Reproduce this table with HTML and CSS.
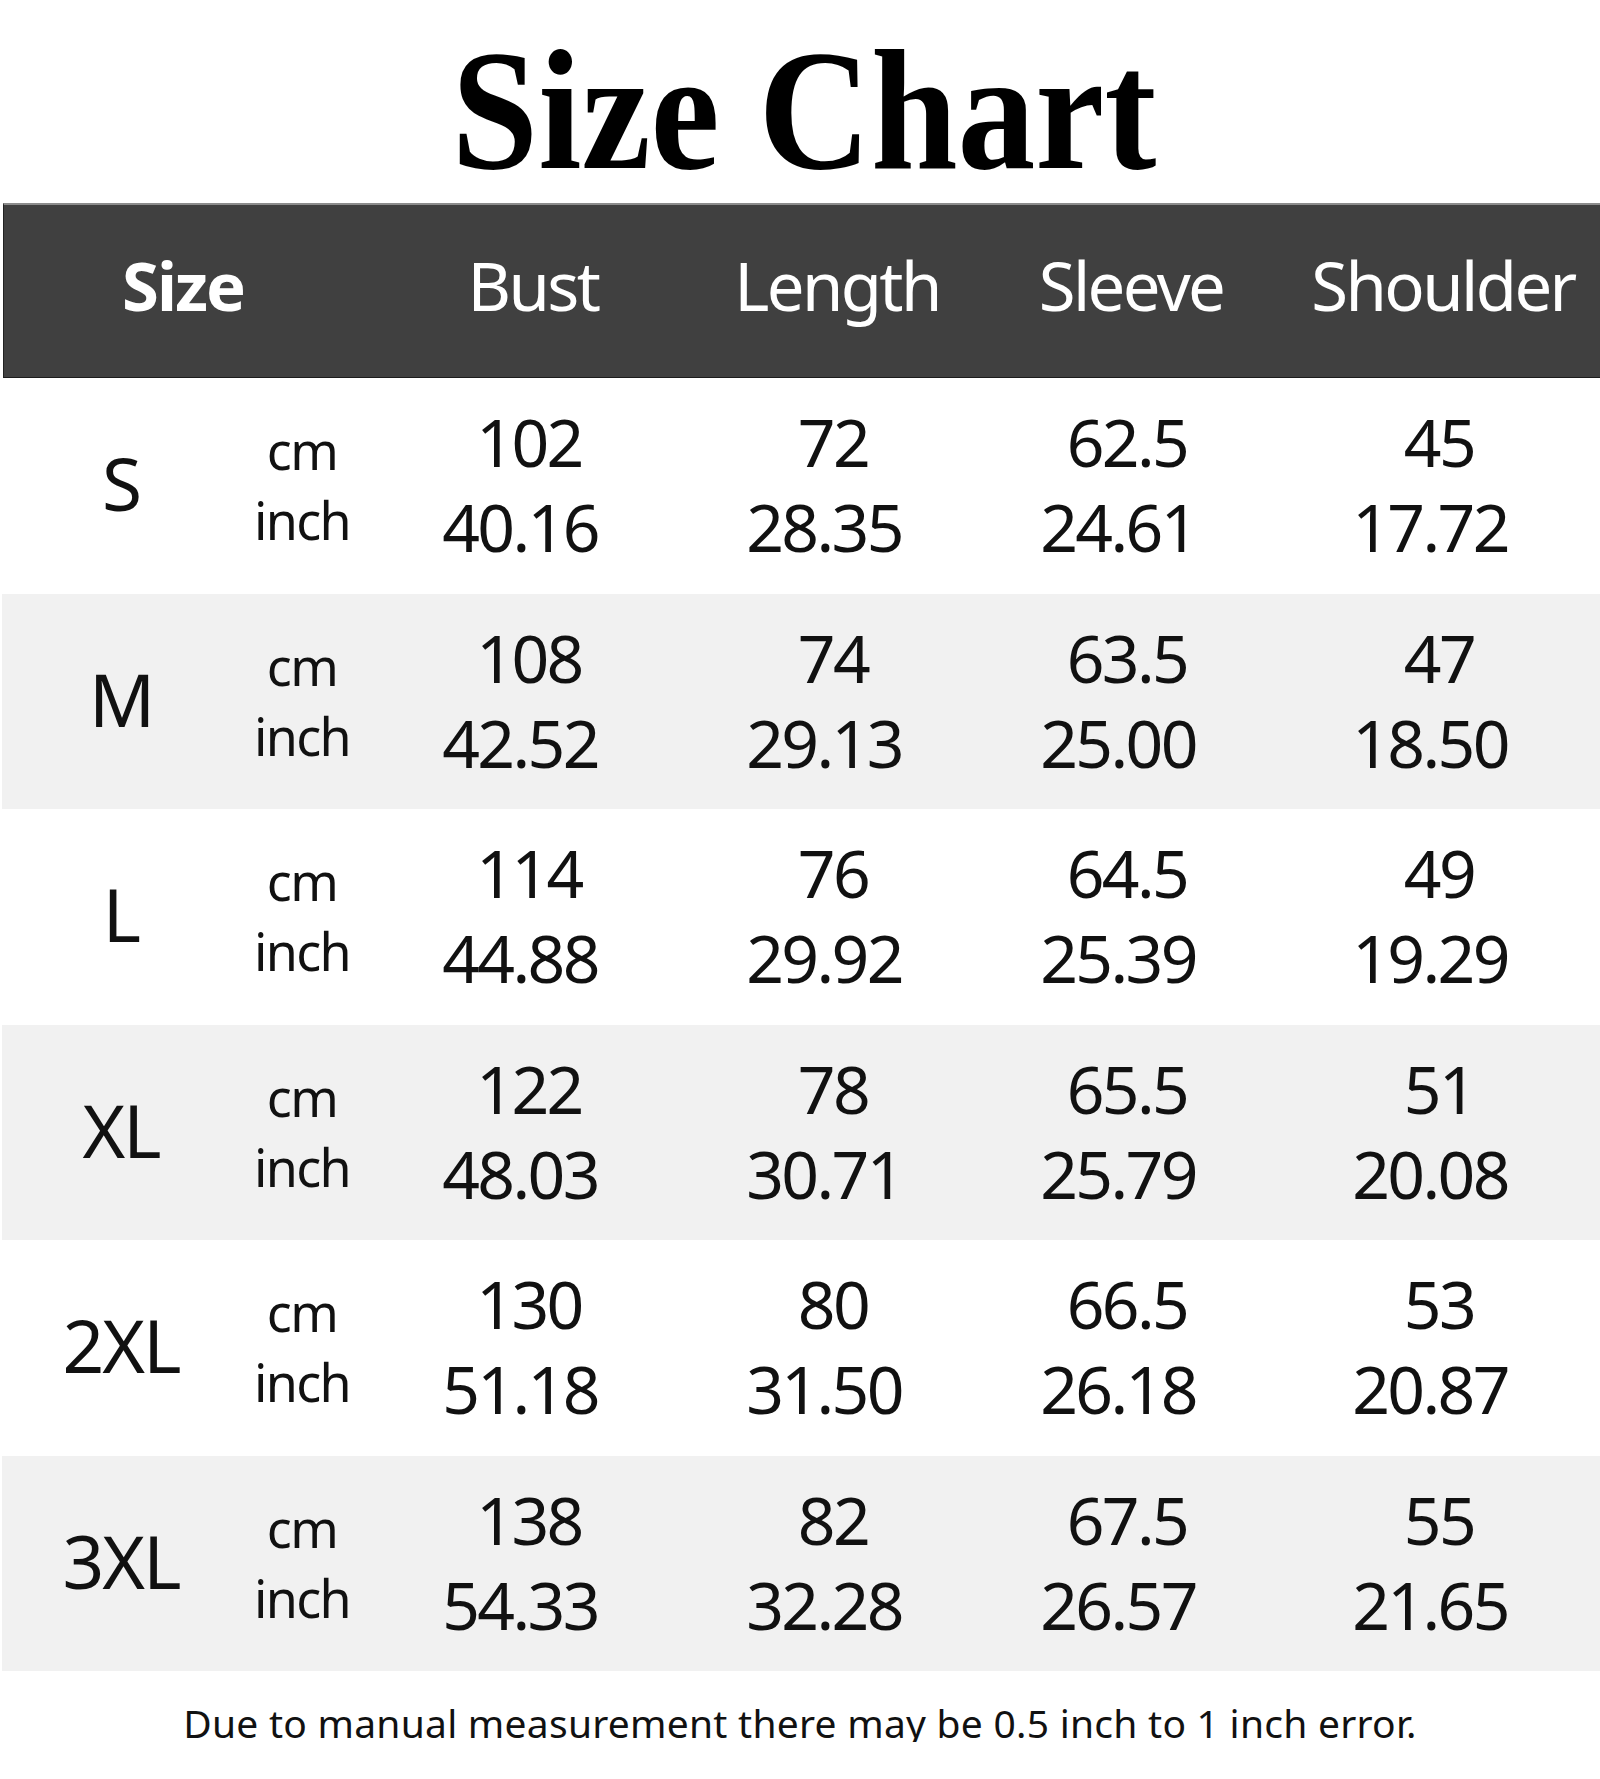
FILE: index.html
```html
<!DOCTYPE html>
<html lang="en">
<head>
<meta charset="utf-8">
<title>Size Chart</title>
<link rel="stylesheet" href="styles.css">
</head>
<body>
<div class="page">
  <h1 class="title"><span class="title-text">Size Chart</span></h1>
  <div class="chart">
    <div class="row head">
      <div class="hcell hsize">Size</div>
      <div class="hcell">Bust</div>
      <div class="hcell">Length</div>
      <div class="hcell">Sleeve</div>
      <div class="hcell">Shoulder</div>
    </div>

    <div class="row">
      <div class="size">S</div>
      <div class="unit"><span>cm</span><span>inch</span></div>
      <div class="val"><span class="cm">102</span><span class="in">40.16</span></div>
      <div class="val"><span class="cm">72</span><span class="in">28.35</span></div>
      <div class="val"><span class="cm">62.5</span><span class="in">24.61</span></div>
      <div class="val"><span class="cm">45</span><span class="in">17.72</span></div>
    </div>

    <div class="row alt">
      <div class="size">M</div>
      <div class="unit"><span>cm</span><span>inch</span></div>
      <div class="val"><span class="cm">108</span><span class="in">42.52</span></div>
      <div class="val"><span class="cm">74</span><span class="in">29.13</span></div>
      <div class="val"><span class="cm">63.5</span><span class="in">25.00</span></div>
      <div class="val"><span class="cm">47</span><span class="in">18.50</span></div>
    </div>

    <div class="row">
      <div class="size">L</div>
      <div class="unit"><span>cm</span><span>inch</span></div>
      <div class="val"><span class="cm">114</span><span class="in">44.88</span></div>
      <div class="val"><span class="cm">76</span><span class="in">29.92</span></div>
      <div class="val"><span class="cm">64.5</span><span class="in">25.39</span></div>
      <div class="val"><span class="cm">49</span><span class="in">19.29</span></div>
    </div>

    <div class="row alt">
      <div class="size">XL</div>
      <div class="unit"><span>cm</span><span>inch</span></div>
      <div class="val"><span class="cm">122</span><span class="in">48.03</span></div>
      <div class="val"><span class="cm">78</span><span class="in">30.71</span></div>
      <div class="val"><span class="cm">65.5</span><span class="in">25.79</span></div>
      <div class="val"><span class="cm">51</span><span class="in">20.08</span></div>
    </div>

    <div class="row">
      <div class="size">2XL</div>
      <div class="unit"><span>cm</span><span>inch</span></div>
      <div class="val"><span class="cm">130</span><span class="in">51.18</span></div>
      <div class="val"><span class="cm">80</span><span class="in">31.50</span></div>
      <div class="val"><span class="cm">66.5</span><span class="in">26.18</span></div>
      <div class="val"><span class="cm">53</span><span class="in">20.87</span></div>
    </div>

    <div class="row alt">
      <div class="size">3XL</div>
      <div class="unit"><span>cm</span><span>inch</span></div>
      <div class="val"><span class="cm">138</span><span class="in">54.33</span></div>
      <div class="val"><span class="cm">82</span><span class="in">32.28</span></div>
      <div class="val"><span class="cm">67.5</span><span class="in">26.57</span></div>
      <div class="val"><span class="cm">55</span><span class="in">21.65</span></div>
    </div>
  </div>
  <p class="note">Due to manual measurement there may be 0.5 inch to 1 inch error.</p>
</div>
</body>
</html>
```

FILE: styles.css
```css
html, body {
  margin: 0;
  padding: 0;
  background: #ffffff;
}

.page {
  width: 1600px;
  font-family: "Noto Sans", "Open Sans", "DejaVu Sans", sans-serif;
  color: #111111;
}

.title {
  margin: 0;
  height: 203px;
  box-sizing: border-box;
  padding-top: 24px;
  text-align: center;
  font-family: "Liberation Serif", "Times New Roman", serif;
  font-weight: bold;
  font-size: 172px;
  line-height: 172px;
  color: #000000;
}

.title-text {
  display: inline-block;
  transform: scaleX(0.905);
  transform-origin: center;
  padding-left: 8px;
}

.chart {
  margin-left: 2px;
  width: 1598px;
}

.row {
  display: grid;
  grid-template-columns: 238px 124px 334px 274px 314px 310px;
  height: 215.5px;
}

.row.alt {
  background: #f1f1f1;
}

.row.head {
  height: 175px;
  box-sizing: border-box;
  background: #404040;
  border-top: 2px solid #8c8c8c;
  border-bottom: 1px solid #1c1c1c;
  border-left: 1px solid #222222;
  margin-left: 1px;
  padding-top: 47px;
}

.hcell {
  text-align: center;
  color: #ffffff;
  font-size: 67px;
  line-height: 67px;
  letter-spacing: -2.6px;
}

.hsize {
  grid-column: span 2;
  font-weight: bold;
  letter-spacing: -2px;
  padding-right: 4px;
}

.size {
  text-align: center;
  font-size: 73px;
  line-height: 73px;
  padding-top: 68px;
  letter-spacing: -2px;
}

.unit {
  display: flex;
  flex-direction: column;
  align-items: center;
  padding-top: 37px;
  font-size: 52px;
  line-height: 70px;
  letter-spacing: -1.6px;
}

.val {
  display: flex;
  flex-direction: column;
  align-items: center;
  padding-top: 21px;
  font-size: 66px;
  line-height: 85px;
  letter-spacing: -2.6px;
}

.val .cm {
  padding-right: 4px;
}

.val .in {
  padding-right: 22px;
}

.note {
  margin: 0;
  padding-top: 32px;
  text-align: center;
  font-size: 39px;
  line-height: 39px;
  letter-spacing: 0.25px;
  color: #111111;
}
```
